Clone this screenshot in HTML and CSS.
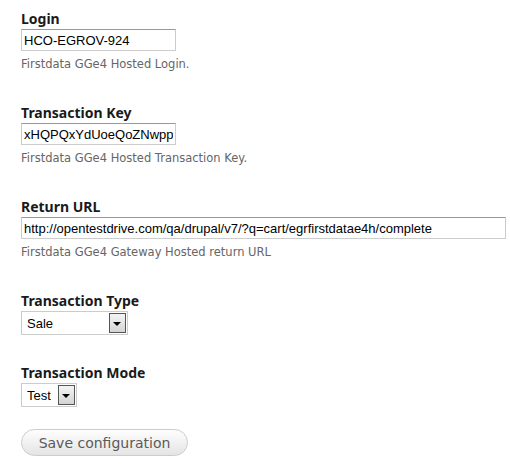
FILE: index.html
```html
<!DOCTYPE html>
<html lang="en">
<head>
    <meta charset="UTF-8">
    <title>Firstdata GGe4 Settings</title>
    <link rel="stylesheet" href="styles.css">
</head>
<body>
    <form class="settings-form">
        <div class="form-item">
            <label for="login">Login</label>
            <input type="text" id="login" class="text-field" value="HCO-EGROV-924">
            <div class="description">Firstdata GGe4 Hosted Login.</div>
        </div>

        <div class="form-item">
            <label for="txkey">Transaction Key</label>
            <input type="text" id="txkey" class="text-field" value="xHQPQxYdUoeQoZNwpp2k">
            <div class="description">Firstdata GGe4 Hosted Transaction Key.</div>
        </div>

        <div class="form-item">
            <label for="returnurl">Return URL</label>
            <input type="text" id="returnurl" class="text-field wide" value="http://opentestdrive.com/qa/drupal/v7/?q=cart/egrfirstdatae4h/complete">
            <div class="description">Firstdata GGe4 Gateway Hosted return URL</div>
        </div>

        <div class="form-item select-item">
            <label for="txtype">Transaction Type</label>
            <span class="select-wrap type">
                <select id="txtype">
                    <option>Sale</option>
                    <option>Authorize</option>
                </select>
            </span>
        </div>

        <div class="form-item select-item last">
            <label for="txmode">Transaction Mode</label>
            <span class="select-wrap mode">
                <select id="txmode">
                    <option>Test</option>
                    <option>Live</option>
                </select>
            </span>
        </div>

        <div class="form-actions">
            <button type="button" class="button">Save configuration</button>
        </div>
    </form>
</body>
</html>
```

FILE: styles.css
```css
body {
    margin: 0;
    padding: 11px 0 0 21px;
    background-color: #fff;
    font-family: "DejaVu Sans", Verdana, sans-serif;
    color: #333;
}
.form-item {
    margin-bottom: 34px;
}
.form-item label {
    display: block;
    font-family: "Noto Sans", "DejaVu Sans", sans-serif;
    font-size: 14px;
    font-weight: bold;
    line-height: 16px;
    color: #1a1a1a;
    margin-bottom: 2px;
}
.text-field {
    display: block;
    box-sizing: border-box;
    width: 155px;
    height: 22px;
    margin: 0;
    padding: 1px 2px;
    border: 1px solid #ccc;
    border-top-color: #999;
    font-family: "Liberation Sans", Arial, sans-serif;
    font-size: 13px;
    color: #000;
}
.text-field.wide {
    width: 485px;
}
.description {
    margin-top: 6px;
    font-size: 11.5px;
    line-height: 14px;
    color: #666;
}
.select-item {
    margin-bottom: 30px;
}
.select-item.last {
    margin-bottom: 22px;
}
.select-wrap {
    position: relative;
    display: inline-block;
    vertical-align: top;
}
.select-wrap select {
    -webkit-appearance: none;
    appearance: none;
    display: block;
    box-sizing: border-box;
    height: 24px;
    margin: 0;
    padding: 0 22px 0 5px;
    border: 1px solid #ccc;
    border-radius: 0;
    background: #fff;
    font-family: "Liberation Sans", Arial, sans-serif;
    font-size: 13px;
    color: #000;
}
.select-wrap.type select {
    width: 107px;
}
.select-wrap.mode select {
    width: 56px;
}
/* arrow button drawn over the right side of the select */
.select-wrap::after {
    content: "";
    position: absolute;
    top: 2px;
    right: 2px;
    width: 15px;
    height: 18px;
    border: 1px solid #555;
    background: linear-gradient(#f4f4f4, #d4d4d4);
    pointer-events: none;
}
.select-wrap::before {
    content: "";
    position: absolute;
    top: 11px;
    right: 7px;
    border-left: 4px solid transparent;
    border-right: 4px solid transparent;
    border-top: 4px solid #000;
    z-index: 1;
    pointer-events: none;
}
.button {
    display: block;
    box-sizing: border-box;
    width: 167px;
    height: 27px;
    padding: 0 12px;
    border: 1px solid #ccc;
    border-radius: 14px;
    background: linear-gradient(#fefefe, #e4e4e4);
    font-family: "DejaVu Sans", Verdana, sans-serif;
    font-size: 14px;
    color: #5a5a5a;
    cursor: pointer;
}
```
